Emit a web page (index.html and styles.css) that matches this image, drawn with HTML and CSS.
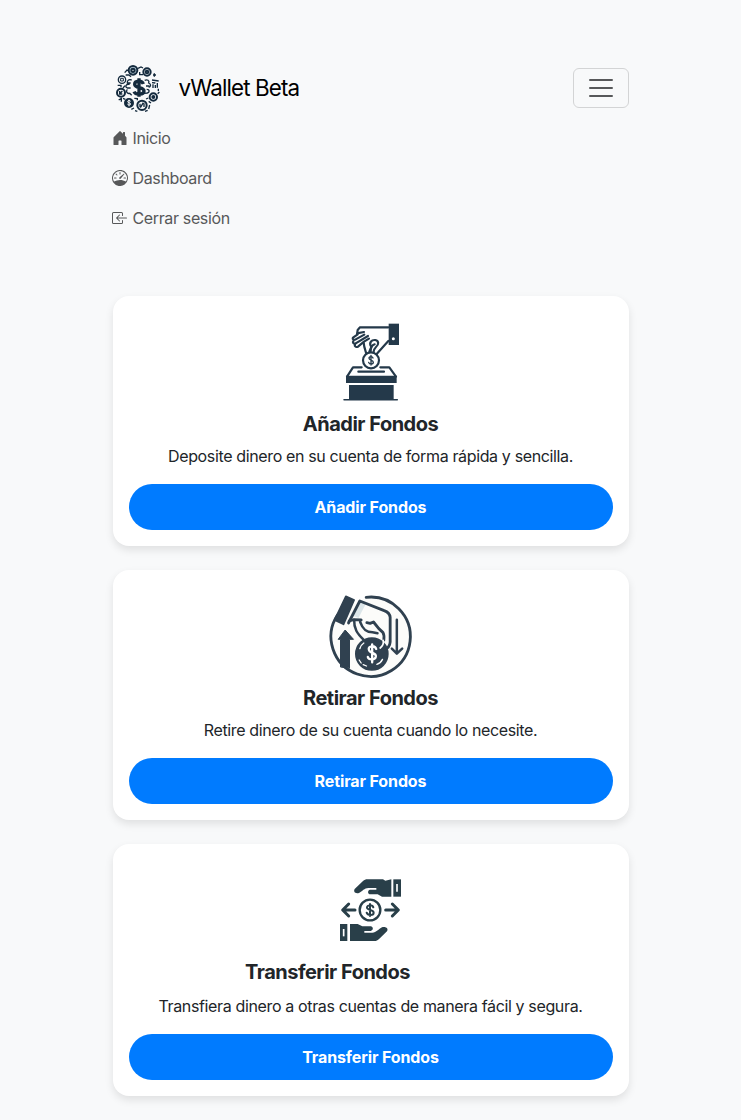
FILE: index.html
```html
<!DOCTYPE html>
<html lang="es">
<head>
<meta charset="utf-8">
<title>vWallet Beta</title>
<link rel="stylesheet" href="styles.css">
</head>
<body>
<div class="container">
  <header class="navbar">
    <div class="navbar-top">
      <a class="brand">
        <svg class="logo" viewBox="17 15 150 150" fill="none" stroke="#142a3d" stroke-width="6">
          <g fill="#b9cfdb"><circle cx="77" cy="37" r="13"/><circle cx="77" cy="37" r="5" fill="#f8f9fa"/></g>
          <circle cx="119" cy="42" r="11"/><circle cx="119" cy="42" r="4"/>
          <circle cx="44" cy="65" r="11" stroke-width="4"/><path d="M40 61h8v8h-8z" stroke-width="3"/>
          <circle cx="41" cy="104" r="12"/><path d="M37 108l8-9M37 99v9h8" stroke-width="4"/>
          <circle cx="65" cy="135" r="12" fill="#142a3d"/>
          <path d="M70 130c-2-4-9-3-9 1s9 3 9 7-8 4-10 0M65 125v20" stroke="#f8f9fa" stroke-width="3"/>
          <circle cx="104" cy="142" r="14"/><path d="M99 149l9-15M98 137v11M110 136v11" stroke-width="4"/>
          <circle cx="138" cy="117" r="11"/><circle cx="138" cy="117" r="3" fill="#142a3d"/>
          <path d="M108 78c-4-12-26-11-26 1 0 14 28 6 28 20 0 12-25 13-30 2M95 61v55" stroke-width="10"/>
          <path d="M73 66c-9-3-14 2-13 9h10M67 79c-12-2-15 8-7 11h10M60 94c-6 7 0 14 7 12l6 6M112 67c8-4 15 1 12 8 8 3 7 11 0 13M116 84h10M118 94c10 0 9 9 2 11l-10 1" stroke-width="4"/>
          <path d="M52 44l7-8 4 2M92 31l9-4 6 3M97 42v8h10M55 51h10l6 5M141 46v10M137 51h9M134 66l20 3M134 74l10 1M150 75v14M137 79v11M144 81v9M153 92v7M31 82h10v6M53 83l-6 7M34 126l8-5v10M47 121l7 3M81 121l9 1v5M80 150l-8 4M116 123l7-3M124 130l7 5M127 141l-3 12M83 158l7 2M113 160l8-3M151 107l5-5" stroke-width="4"/>
        </svg>
        <span>vWallet Beta</span>
      </a>
      <button class="toggler" aria-label="Menú">
        <svg width="30" height="30" viewBox="0 0 30 30"><path stroke="#57585a" stroke-linecap="round" stroke-miterlimit="10" stroke-width="2" d="M4 7h22M4 15h22M4 23h22"/></svg>
      </button>
    </div>
    <nav class="menu">
      <a class="menu-link"><svg class="bi" viewBox="0 0 16 16"><path d="M6.5 14.5v-3.505c0-.245.25-.495.5-.495h2c.25 0 .5.25.5.5v3.5a.5.5 0 0 0 .5.5h4a.5.5 0 0 0 .5-.5v-7a.5.5 0 0 0-.146-.354L13 5.793V2.5a.5.5 0 0 0-.5-.5h-1a.5.5 0 0 0-.5.5v1.293L8.354 1.146a.5.5 0 0 0-.708 0l-6 6A.5.5 0 0 0 1.5 7.5v7a.5.5 0 0 0 .5.5h4a.5.5 0 0 0 .5-.5"/></svg><span>Inicio</span></a>
      <a class="menu-link"><svg class="bi" viewBox="0 0 16 16"><path d="M8 2a.5.5 0 0 1 .5.5V4a.5.5 0 0 1-1 0V2.5A.5.5 0 0 1 8 2M3.732 3.732a.5.5 0 0 1 .707 0l.915.914a.5.5 0 1 1-.708.708l-.914-.915a.5.5 0 0 1 0-.707M2 8a.5.5 0 0 1 .5-.5h1.586a.5.5 0 0 1 0 1H2.5A.5.5 0 0 1 2 8m9.5 0a.5.5 0 0 1 .5-.5h1.5a.5.5 0 0 1 0 1H12a.5.5 0 0 1-.5-.5m.754-4.246a.39.39 0 0 0-.527-.02L7.547 7.31A.91.91 0 1 0 8.85 8.569l3.434-4.297a.39.39 0 0 0-.029-.518z"/><path fill-rule="evenodd" d="M6.664 15.889A8 8 0 1 1 9.336.11a8 8 0 0 1-2.672 15.780zm-4.665-4.283A11.950 11.950 0 0 1 8 10c2.186 0 4.236.585 6.001 1.606a7 7 0 1 0-12.002 0"/></svg><span>Dashboard</span></a>
      <a class="menu-link"><svg class="bi" viewBox="0 0 16 16"><path fill-rule="evenodd" d="M10 3.500a.5.5 0 0 0-.5-.5h-8a.5.5 0 0 0-.5.5v9a.5.5 0 0 0 .5.5h8a.5.5 0 0 0 .5-.5v-2a.5.5 0 0 1 1 0v2A1.500 1.500 0 0 1 9.500 14h-8A1.500 1.500 0 0 1 0 12.500v-9A1.500 1.500 0 0 1 1.500 2h8A1.500 1.500 0 0 1 11 3.500v2a.5.5 0 0 1-1 0z"/><path fill-rule="evenodd" d="M4.146 8.354a.5.5 0 0 1 0-.708l3-3a.5.5 0 1 1 .708.708L5.707 7.500H14.500a.5.5 0 0 1 0 1H5.707l2.147 2.146a.5.5 0 0 1-.708.708z"/></svg><span>Cerrar sesión</span></a>
    </nav>
  </header>

  <main class="cards">
    <section class="card">
      <svg class="picture" viewBox="-42 -9 300 300" fill="none" stroke="#24394a" stroke-width="6.500" stroke-linecap="round" stroke-linejoin="round">
        <path d="M161 26h31v64h-31z" fill="#24394a" stroke="none"/><circle cx="175" cy="71" r="4.500" fill="#fff" stroke="none"/>
        <path d="M160 37H75l-7 8-2 13M66 55l21-4M68 58L54 68c-3 5 3 8 8 5l26-14M56 76c-5 7 0 12 6 9l37-22M62 85c-6 8 0 13 7 10l18-15 15-9M86 82c1 16 5 24 8 34M103 110l6-14M160 78l-35 39"/>
        <path d="M109 96c-9-13 1-22 12-21 11 2 11 14 2 21-6 5-7 10-8 18M107 109c0-12 5-19 12-21"/>
        <circle cx="108" cy="136" r="24" fill="#fff"/>
        <path d="M114 129c-2-6-13-5-12 1 0 6 13 5 13 12 0 7-12 7-14 0M108 121v29" stroke-width="4"/>
        <path d="M80 157H54l-18 28M136 157h27l20 28M70 170h77"/>
        <path d="M33 182h152v22H33z" fill="#24394a" stroke="none"/>
        <path d="M42 210h134v43H42z" fill="#24394a" stroke="none"/><path d="M27 254h160" stroke-width="4.500"/>
      </svg>
      <h5 class="title">Añadir Fondos</h5>
      <p class="text">Deposite dinero en su cuenta de forma rápida y sencilla.</p>
      <a class="button">Añadir Fondos</a>
    </section>

    <section class="card">
      <svg class="picture" viewBox="-4.500 -7 300 300" fill="none" stroke="#304150" stroke-width="8.500" stroke-linecap="round" stroke-linejoin="round">
        <path d="M131 27A119 119 0 1 1 45 80" fill="#fcfcfa"/>
        <path d="M70 24l25 11-32 73-27-13z" fill="#304150" stroke-width="5"/>
        <path d="M112 39l18 7-22 43-17-7z" fill="#dce6e9" stroke="none"/>
        <path d="M78 104l34-66 73 29c11 4 17 10 18 20v74c-1 15-8 20-18 23"/>
        <path d="M80 98l14-4 22 1M133 103l10 2 10-4 16 20 12 11c5 8 4 15 3 23"/>
        <path d="M95 95c-1 26 9 40 28 59M113 101c8 22 18 31 37 31l15 3" stroke-width="7.500"/>
        <path d="M54 235v-82H47l21-28 25 28H81v86z" fill="#304150" stroke-width="3"/>
        <circle cx="148" cy="197" r="48" fill="#304150" stroke="#304150" stroke-width="5"/>
        <path d="M161 182c-4-13-25-9-22 2 2 13 23 7 21 21-2 12-22 10-24 1M149 168v54" stroke="#fff" stroke-width="7"/>
        <path d="M112 181c3-9 7-14 12-17M110 215l6 9M122 229l10 4M180 213c-4 8-10 13-17 15" stroke="#fff" stroke-width="4"/>
        <path d="M182 156c2 9-3 18-9 23" stroke="#fff" stroke-width="5"/>
        <path d="M223 94v94M208 181l15 15 16-15" stroke-width="7.500"/>
      </svg>
      <h5 class="title">Retirar Fondos</h5>
      <p class="text">Retire dinero de su cuenta cuando lo necesite.</p>
      <a class="button">Retirar Fondos</a>
    </section>

    <section class="card">
      <svg class="picture" viewBox="-27 -30 300 300" fill="none" stroke="#293f49" stroke-width="9" stroke-linecap="round" stroke-linejoin="round">
        <path d="M190 28h23v52h-23z" fill="#293f49" stroke="none"/><path d="M201 42v23" stroke="#fff" stroke-width="5" stroke-linecap="butt"/>
        <path d="M184 28v52h-28l-13-7h-24c-7-3-6-12 1-14h19v-5h-24c-12 0-18 10-28 15-13 3-17-5-13-12l25-24c4-3 8-5 13-5h47l7 4z" fill="#293f49" stroke="none"/>
        <path d="M30 162h22v51H30z" fill="#293f49" stroke="none"/><path d="M41 177v22" stroke="#fff" stroke-width="5" stroke-linecap="butt"/>
        <path d="M60 162h23l14 7h26c8 3 7 12-1 14h-19v5h24c12 0 19-11 29-16 13-3 20 5 15 12l-23 22c-5 5-9 7-15 7H60z" fill="#293f49" stroke="none"/>
        <circle cx="120" cy="120" r="31" stroke-width="7"/>
        <path d="M130 112c-3-9-20-7-19 1 1 9 20 5 20 15 0 9-18 9-21 0M120 102v36" stroke-width="6"/>
        <path d="M75 120H39M56 102l-18 18 18 18M167 120h36M187 102l18 18-18 18"/>
      </svg>
      <h5 class="title title-shifted">Transferir Fondos</h5>
      <p class="text">Transfiera dinero a otras cuentas de manera fácil y segura.</p>
      <a class="button">Transferir Fondos</a>
    </section>
  </main>
</div>
</body>
</html>
```
FILE: styles.css
```css
* { box-sizing: border-box; }
body {
  margin: 0;
  background: #f8f9fa;
  color: #212529;
  font: 16px/24px Inter, "Liberation Sans", sans-serif;
  letter-spacing: -0.36px;
}
.container { width: 516px; margin: 0 auto; padding: 58px 0 24px; }
.navbar { margin-bottom: 58px; }
.navbar-top { display: flex; align-items: center; justify-content: space-between; height: 60px; }
.brand { display: flex; align-items: center; gap: 16px; color: #000; font-size: 22.4px; letter-spacing: -0.88px; }
.logo { width: 50px; height: 50px; }
.toggler {
  display: flex; align-items: center; justify-content: center;
  width: 56px; height: 40px; padding: 0;
  border: 1px solid #d3d4d5; border-radius: 6px; background: none;
}
.menu { margin-left: -0.5px; }
.menu-link { display: flex; align-items: center; gap: 4.5px; height: 40px; color: #575859; }
.bi { width: 16px; height: 16px; fill: currentColor; }
.cards { display: flex; flex-direction: column; gap: 24px; }
.card {
  padding: 16px;
  border-radius: 16px;
  background: #fff;
  box-shadow: 0 4px 8px rgba(0, 0, 0, .1);
  text-align: center;
}
.picture { display: block; width: 100px; height: 100px; margin: 0 auto; }
.title { margin: 0 0 8px; font-size: 20px; line-height: 24px; font-weight: 700; letter-spacing: -0.5px; }
.title-shifted { margin-bottom: 10px; padding-right: 86px; }
.text { margin: 0 0 16px; }
.button {
  display: block; height: 46px; border-radius: 23px;
  background: #007bff; color: #fff;
  font-weight: 700; line-height: 46px; letter-spacing: -0.12px;
}
```
